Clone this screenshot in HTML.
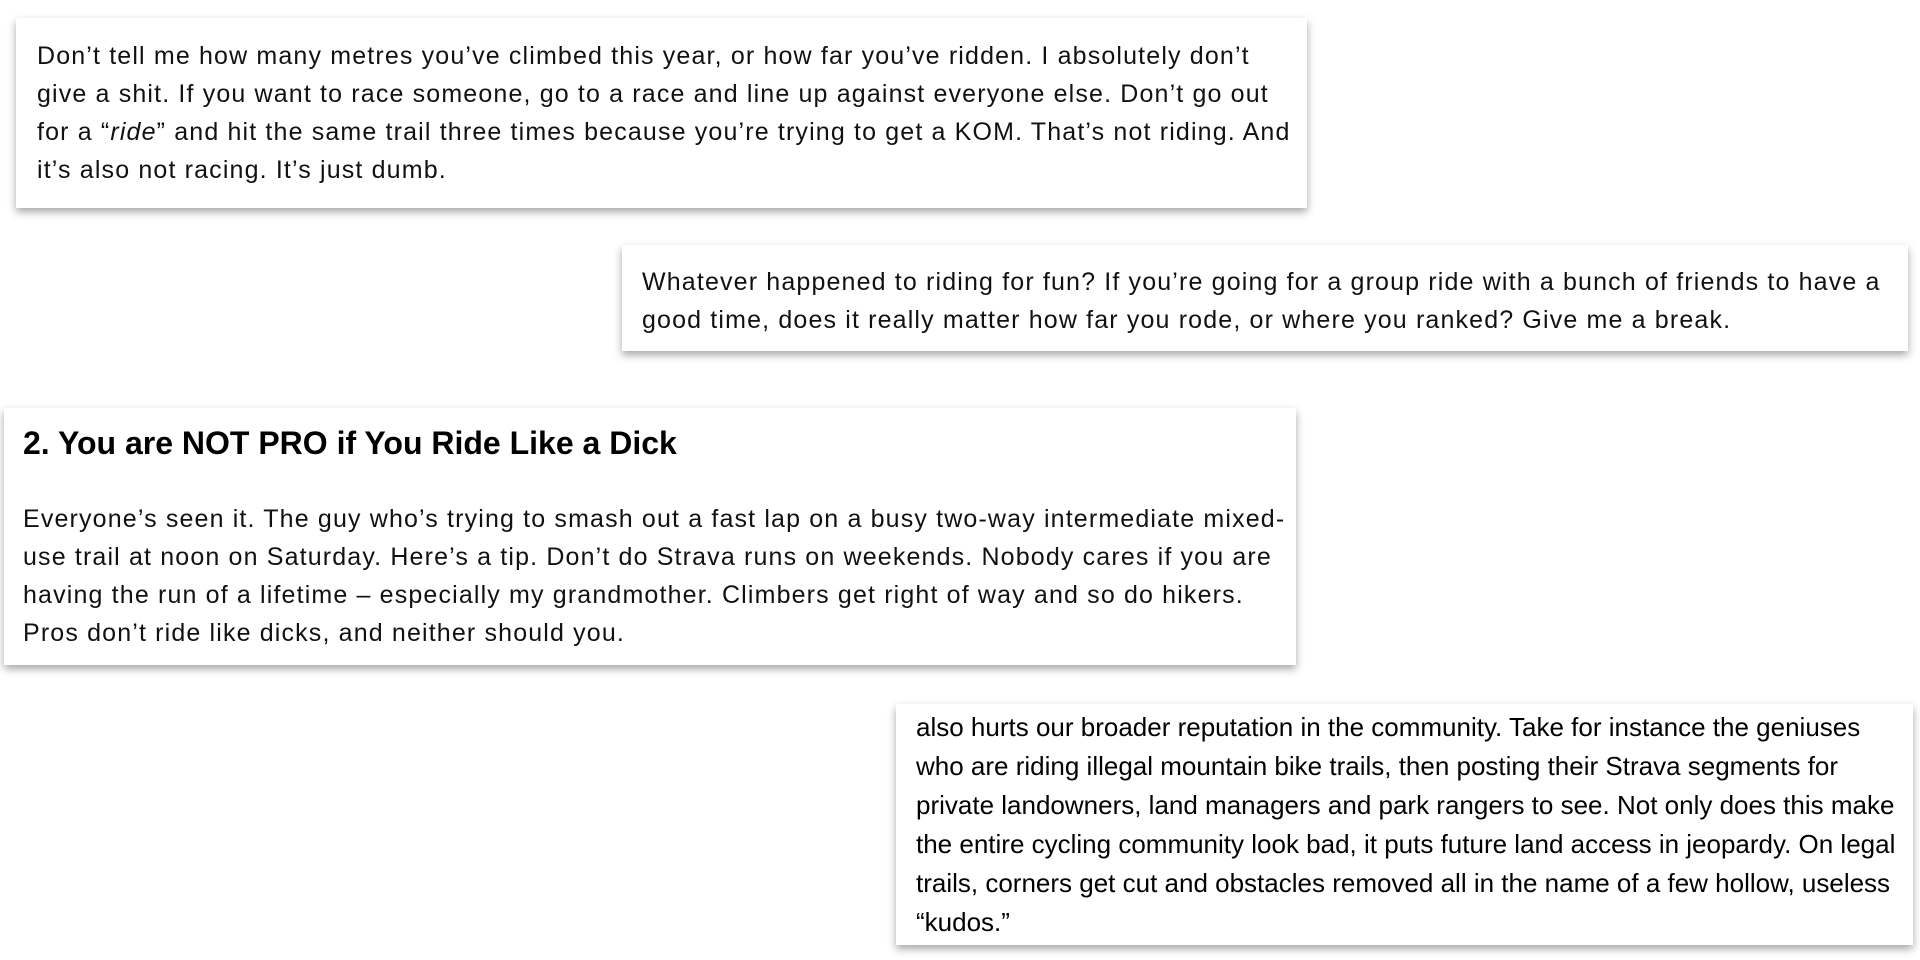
<!DOCTYPE html>
<html><head><meta charset="utf-8"><style>
html,body{margin:0;width:1920px;height:960px;background:#fff;overflow:hidden;position:relative}
.c{position:absolute;background:#fff;box-shadow:0 4px 8px rgba(0,0,0,.35);box-sizing:border-box;color:#111}
.o{font-family:"Liberation Sans",sans-serif;font-size:25px;line-height:38px;letter-spacing:1.15px;white-space:nowrap}
p{margin:0}
h2{margin:0;font-family:"Liberation Sans",sans-serif;font-weight:bold;font-size:32px;line-height:36px;color:#000;letter-spacing:0}
</style></head><body>
<div class="c o" style="left:16px;top:18px;width:1291px;height:190px;padding:19px 0 0 21px">
<p>Don’t tell me how many metres you’ve climbed this year, or how far you’ve ridden. I absolutely don’t<br>give a shit. If you want to race someone, go to a race and line up against everyone else. Don’t go out<br>for a “<i>ride</i>” and hit the same trail three times because you’re trying to get a KOM. That’s not riding. And<br>it’s also not racing. It’s just dumb.</p></div>
<div class="c o" style="left:622px;top:245px;width:1286px;height:106px;padding:18px 0 0 20px">
<p>Whatever happened to riding for fun? If you’re going for a group ride with a bunch of friends to have a<br>good time, does it really matter how far you rode, or where you ranked? Give me a break.</p></div>
<div class="c o" style="left:4px;top:408px;width:1292px;height:257px;padding:17px 0 0 19px">
<h2>2. You are NOT PRO if You Ride Like a Dick</h2>
<p style="margin-top:39px">Everyone’s seen it. The guy who’s trying to smash out a fast lap on a busy two-way intermediate mixed-<br>use trail at noon on Saturday. Here’s a tip. Don’t do Strava runs on weekends. Nobody cares if you are<br>having the run of a lifetime – especially my grandmother. Climbers get right of way and so do hikers.<br>Pros don’t ride like dicks, and neither should you.</p></div>
<div class="c" style="left:896px;top:704px;width:1017px;height:241px;padding:4px 0 0 20px;font-family:'Liberation Sans',sans-serif;font-size:26px;line-height:39px;color:#000;white-space:nowrap">
<p>also hurts our broader reputation in the community. Take for instance the geniuses<br>who are riding illegal mountain bike trails, then posting their Strava segments for<br>private landowners, land managers and park rangers to see. Not only does this make<br>the entire cycling community look bad, it puts future land access in jeopardy. On legal<br>trails, corners get cut and obstacles removed all in the name of a few hollow, useless<br>“kudos.”</p></div>
</body></html>
